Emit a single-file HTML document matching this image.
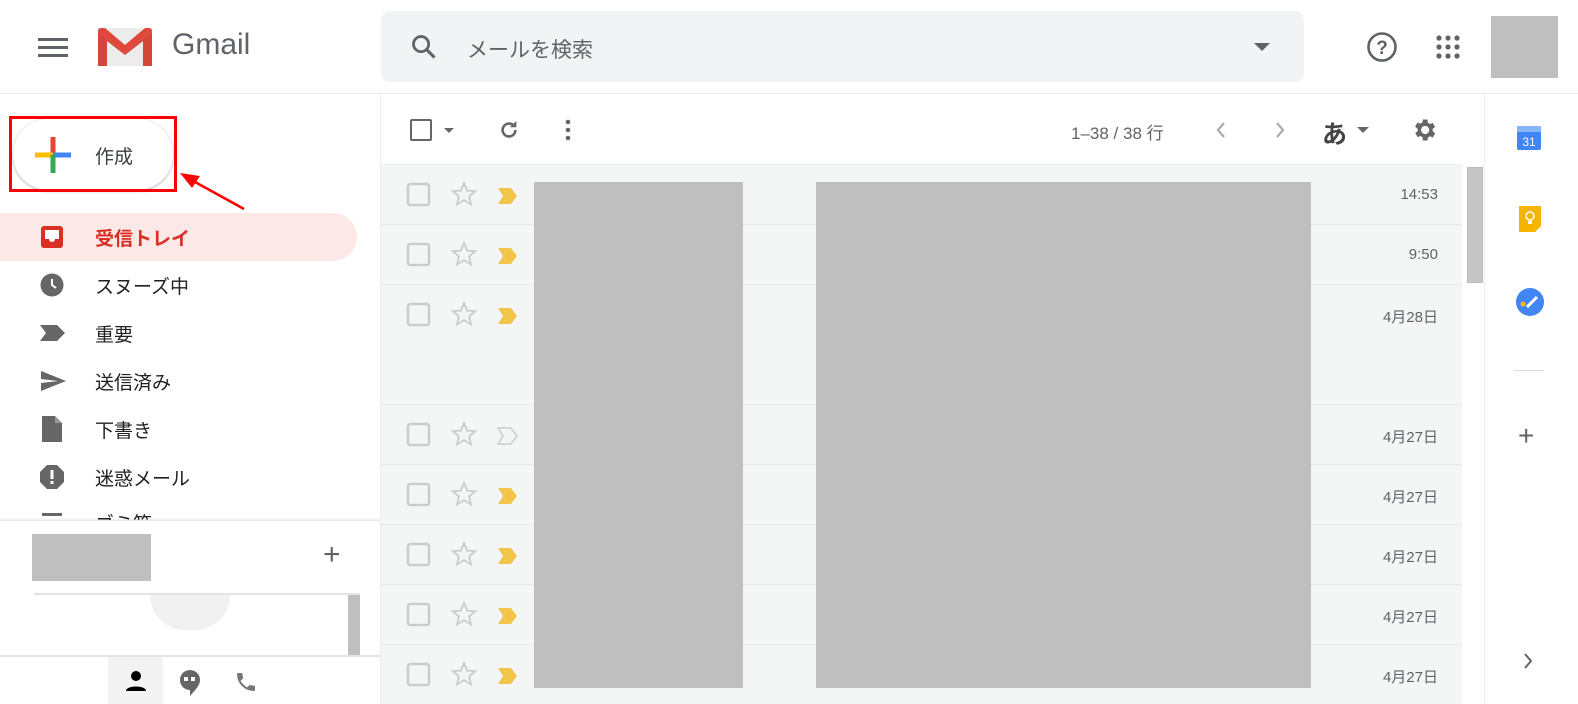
<!DOCTYPE html>
<html style="overflow:hidden;width:1578px;height:704px"><head><meta charset="utf-8"><style>
*{margin:0;padding:0;box-sizing:border-box}
body{width:1578px;height:704px;overflow:hidden;background:#fff;font-family:"Liberation Sans","Noto Sans CJK JP",sans-serif;color:#202124;position:relative}
.a{position:absolute}
.nav{position:absolute;left:0;width:357px;height:48px;display:flex;align-items:center;font-size:19px;color:#202124}
.nav .t{position:absolute;left:95px}
.nav svg{position:absolute;left:40px}
.row{position:absolute;left:381px;width:1081px;background:#f4f6f6;border-bottom:1px solid #e4e7ea}
.date{position:absolute;right:24px;font-size:15px;color:#5f6368}
</style></head><body>
<svg class="a" style="left:38px;top:36px" width="30" height="22"><rect y="2" width="30" height="3" fill="#5f6368"/><rect y="10" width="30" height="3" fill="#5f6368"/><rect y="18" width="30" height="3" fill="#5f6368"/></svg>
<svg class="a" style="left:97px;top:27px" width="56" height="40" viewBox="0 0 56 40"><rect x="1" y="1" width="54" height="38" rx="3" fill="#ececec"/><path d="M1 4 L28 26 L55 4 L55 39 L46 39 L46 14 L28 28 L10 14 L10 39 L1 39 Z" fill="#d44638"/><path d="M1 4 Q1 1 4 1 L8 1 L28 18 L48 1 L52 1 Q55 1 55 4 L28 26 Z" fill="#e1473b"/></svg>
<div class="a" style="left:172px;top:28px;font-size:30px;color:#5f6368">Gmail</div>
<div class="a" style="left:381px;top:11px;width:923px;height:71px;background:#f1f3f4;border-radius:9px"></div>
<svg class="a" style="left:410px;top:33px" width="28" height="28" viewBox="0 0 24 24"><circle cx="9.5" cy="9.5" r="6.5" fill="none" stroke="#5f6368" stroke-width="2.4"/><path d="M14.5 14.5L21 21" stroke="#5f6368" stroke-width="2.6"/></svg>
<div class="a" style="left:467px;top:34px;font-size:21px;color:#5f6368">メールを検索</div>
<div class="a" style="left:1254px;top:43px;border-left:8px solid transparent;border-right:8px solid transparent;border-top:8px solid #5f6368"></div>
<svg class="a" style="left:1366px;top:31px" width="32" height="32" viewBox="0 0 32 32"><circle cx="16" cy="16" r="13.5" fill="none" stroke="#5f6368" stroke-width="2.6"/><text x="16" y="23" text-anchor="middle" font-size="19" font-weight="bold" fill="#5f6368" font-family="Liberation Sans">?</text></svg>
<svg class="a" style="left:1436px;top:35px" width="24" height="24"><g fill="#5f6368"><circle cx="3" cy="3" r="2.6"/><circle cx="12" cy="3" r="2.6"/><circle cx="21" cy="3" r="2.6"/><circle cx="3" cy="12" r="2.6"/><circle cx="12" cy="12" r="2.6"/><circle cx="21" cy="12" r="2.6"/><circle cx="3" cy="21" r="2.6"/><circle cx="12" cy="21" r="2.6"/><circle cx="21" cy="21" r="2.6"/></g></svg>
<div class="a" style="left:1491px;top:16px;width:67px;height:62px;background:#bfbfbf"></div>
<div class="a" style="left:0;top:93px;width:1578px;height:1px;background:#e8e8e8"></div>
<div class="a" style="left:13px;top:119px;width:160px;height:71px;border-radius:36px;background:#fff;box-shadow:0 1px 3px rgba(0,0,0,.3)"></div>
<div class="a" style="left:9px;top:116px;width:168px;height:76px;border:3px solid #f00"></div>
<svg class="a" style="left:35px;top:137px" width="36" height="36" viewBox="0 0 36 36"><rect x="15.5" y="0" width="5" height="18" fill="#ea4335"/><rect x="0" y="15.5" width="18" height="5" fill="#fbbc04"/><rect x="18" y="15.5" width="18" height="5" fill="#4285f4"/><rect x="15.5" y="18" width="5" height="18" fill="#34a853"/></svg>
<div class="a" style="left:95px;top:142px;font-size:19px;color:#3c4043">作成</div>
<svg class="a" style="left:178px;top:168px" width="70" height="45"><path d="M66 41 L8 9" stroke="#f00" stroke-width="2.5"/><path d="M2 5 L22 8 L14 20 Z" fill="#f00"/></svg>
<div class="nav" style="top:213px;background:#fce8e6;border-radius:0 24px 24px 0;color:#d93025;font-weight:bold"><svg width="24" height="24" viewBox="0 0 24 24"><rect x="1" y="1" width="22" height="22" rx="3" fill="#d93025"/><path d="M5 5h14v9h-4a3 3 0 0 1-6 0H5z" fill="#fff"/></svg><span class="t">受信トレイ</span></div>
<div class="nav" style="top:261px"><svg width="24" height="24" viewBox="0 0 24 24"><circle cx="12" cy="12" r="11.5" fill="#666"/><path d="M12 6v6l4 3" stroke="#fff" stroke-width="2" fill="none"/></svg><span class="t">スヌーズ中</span></div>
<div class="nav" style="top:309px"><svg width="26" height="20" viewBox="0 0 26 20"><path d="M0 2h17l8 8-8 8H0l6-8z" fill="#666"/></svg><span class="t">重要</span></div>
<div class="nav" style="top:357px"><svg width="26" height="24" viewBox="0 0 26 24"><path d="M1 22L26 12 1 2v8l17 2-17 2z" fill="#666"/></svg><span class="t">送信済み</span></div>
<div class="nav" style="top:405px"><svg width="24" height="26" viewBox="0 0 24 26"><path d="M2 0h13l7 7v19H2z" fill="#666"/><path d="M15 0v7h7" fill="#999"/></svg><span class="t">下書き</span></div>
<div class="nav" style="top:453px"><svg width="24" height="24" viewBox="0 0 24 24"><path d="M7 0h10l7 7v10l-7 7H7l-7-7V7z" fill="#666"/><rect x="10.5" y="5" width="3" height="9" fill="#fff"/><rect x="10.5" y="16" width="3" height="3" fill="#fff"/></svg><span class="t">迷惑メール</span></div>
<div class="nav" style="top:501px;height:20px;overflow:hidden;align-items:flex-start"><svg width="24" height="24" style="top:10px"><rect x="2" y="2" width="20" height="3" fill="#666"/></svg><span class="t" style="top:8px">ゴミ箱</span></div>
<div class="a" style="left:0;top:520px;width:380px;height:184px;background:#fff;border-top:1px solid #e8e8e8;box-shadow:0 -1px 2px rgba(0,0,0,.08)"></div>
<div class="a" style="left:32px;top:534px;width:119px;height:47px;background:#bfbfbf"></div>
<div class="a" style="left:323px;top:538px;font-size:30px;color:#5f6368;font-weight:300">+</div>
<div class="a" style="left:34px;top:593px;width:326px;height:2px;background:#e4e4e4"></div>
<div class="a" style="left:150px;top:595px;width:80px;height:35px;background:#f1f1f1;border-radius:0 0 40px 40px"></div>
<div class="a" style="left:348px;top:595px;width:12px;height:60px;background:#bfbfbf"></div>
<div class="a" style="left:0;top:655px;width:380px;height:2px;background:#e4e4e4"></div>
<div class="a" style="left:108px;top:657px;width:55px;height:47px;background:#f3f3f3"></div>
<svg class="a" style="left:125px;top:670px" width="22" height="22" viewBox="0 0 22 22"><circle cx="11" cy="6" r="5" fill="#000"/><path d="M1 21c0-6 20-6 20 0z" fill="#000"/></svg>
<svg class="a" style="left:179px;top:670px" width="22" height="26" viewBox="0 0 22 26"><path d="M11 0a10 10 0 0 1 10 10c0 6-6 11-10 16V20A10 10 0 0 1 11 0z" fill="#666"/><rect x="5" y="7" width="4" height="4" fill="#fff"/><rect x="12" y="7" width="4" height="4" fill="#fff"/></svg>
<svg class="a" style="left:234px;top:670px" width="24" height="24" viewBox="0 0 24 24"><path d="M6.6 10.8c1.4 2.8 3.8 5.1 6.6 6.6l2.2-2.2c.3-.3.7-.4 1-.2 1.1.4 2.3.6 3.6.6.6 0 1 .4 1 1V20c0 .6-.4 1-1 1C10.6 21 3 13.4 3 4c0-.6.4-1 1-1h3.5c.6 0 1 .4 1 1 0 1.3.2 2.5.6 3.6.1.3 0 .7-.2 1z" fill="#777"/></svg>
<div class="a" style="left:380px;top:94px;width:1px;height:610px;background:#eee"></div>
<div class="a" style="left:410px;top:119px;width:22px;height:22px;border:2.5px solid #666;border-radius:2px"></div>
<div class="a" style="left:444px;top:128px;border-left:5px solid transparent;border-right:5px solid transparent;border-top:5px solid #666"></div>
<svg class="a" style="left:498px;top:119px" width="22" height="22" viewBox="0 0 24 24"><path d="M19 12a7 7 0 1 1-2.1-5" fill="none" stroke="#666" stroke-width="2.8"/><path d="M20 2v7h-7z" fill="#666"/></svg>
<svg class="a" style="left:564px;top:119px" width="8" height="24"><circle cx="4" cy="3" r="2.3" fill="#666"/><circle cx="4" cy="11" r="2.3" fill="#666"/><circle cx="4" cy="19" r="2.3" fill="#666"/></svg>
<div class="a" style="left:1071px;top:119px;font-size:17px;color:#5f6368">1–38 / 38 行</div>
<svg class="a" style="left:1215px;top:121px" width="12" height="18"><path d="M9 2L3 9l6 7" fill="none" stroke="#aaa" stroke-width="2.2"/></svg>
<svg class="a" style="left:1274px;top:121px" width="12" height="18"><path d="M3 2l6 7-6 7" fill="none" stroke="#aaa" stroke-width="2.2"/></svg>
<div class="a" style="left:1322px;top:115px;font-size:25px;color:#444;font-weight:bold">あ</div>
<div class="a" style="left:1357px;top:127px;border-left:6px solid transparent;border-right:6px solid transparent;border-top:6px solid #666"></div>
<svg class="a" style="left:1410px;top:116px" width="28" height="28" viewBox="0 0 24 24"><path fill="#666" d="M19.4 13a7.5 7.5 0 0 0 0-2l2.1-1.6-2-3.5-2.5 1a7 7 0 0 0-1.7-1L15 3h-4l-.4 2.6a7 7 0 0 0-1.7 1l-2.5-1-2 3.5L6.6 11a7.5 7.5 0 0 0 0 2l-2.1 1.6 2 3.5 2.5-1a7 7 0 0 0 1.7 1L11 21h4l.4-2.6a7 7 0 0 0 1.7-1l2.5 1 2-3.5zM13 15.5a3.5 3.5 0 1 1 0-7 3.5 3.5 0 0 1 0 7z"/></svg>
<div class="a" style="left:381px;top:164px;width:1081px;height:1px;background:#eceff1"></div>
<div class="row" style="top:165px;height:60px"><div class="date" style="top:21px">14:53</div></div>
<div class="row" style="top:225px;height:60px"><div class="date" style="top:21px">9:50</div></div>
<div class="row" style="top:285px;height:120px"><div class="date" style="top:21px">4月28日</div></div>
<div class="row" style="top:405px;height:60px"><div class="date" style="top:21px">4月27日</div></div>
<div class="row" style="top:465px;height:60px"><div class="date" style="top:21px">4月27日</div></div>
<div class="row" style="top:525px;height:60px"><div class="date" style="top:21px">4月27日</div></div>
<div class="row" style="top:585px;height:60px"><div class="date" style="top:21px">4月27日</div></div>
<div class="row" style="top:645px;height:59px;border-bottom:0"><div class="date" style="top:21px">4月27日</div></div>
<svg class="a" style="left:405px;top:180px" width="120" height="520">
<defs><g id="r"><rect x="3" y="4" width="21" height="21" rx="2" fill="none" stroke="#ccc" stroke-width="2.5"/><path d="M59 3l3.2 7.6 8.1.6-6.2 5.3 1.9 8-7-4.3-7 4.3 1.9-8-6.2-5.3 8.1-.6z" fill="none" stroke="#ccc" stroke-width="1.8"/></g><path id="tag" d="M93 8h13l6 8-6 8H93l5-8z"/></defs>
<g><use href="#r"/><use href="#tag" fill="#f2c54b"/></g>
<g transform="translate(0,60)"><use href="#r"/><use href="#tag" fill="#f2c54b"/></g>
<g transform="translate(0,120)"><use href="#r"/><use href="#tag" fill="#f2c54b"/></g>
<g transform="translate(0,240)"><use href="#r"/><use href="#tag" fill="none" stroke="#ccc" stroke-width="1.5"/></g>
<g transform="translate(0,300)"><use href="#r"/><use href="#tag" fill="#f2c54b"/></g>
<g transform="translate(0,360)"><use href="#r"/><use href="#tag" fill="#f2c54b"/></g>
<g transform="translate(0,420)"><use href="#r"/><use href="#tag" fill="#f2c54b"/></g>
<g transform="translate(0,480)"><use href="#r"/><use href="#tag" fill="#f2c54b"/></g>
</svg>
<div class="a" style="left:534px;top:182px;width:209px;height:506px;background:#bfbfbf"></div>
<div class="a" style="left:816px;top:182px;width:495px;height:506px;background:#bfbfbf"></div>
<div class="a" style="left:1462px;top:165px;width:22px;height:539px;background:#fff"></div>
<div class="a" style="left:1467px;top:167px;width:16px;height:116px;background:#c6c6c6;border:1px solid #bbb"></div>
<div class="a" style="left:1484px;top:94px;width:1px;height:610px;background:#eee"></div>
<svg class="a" style="left:1514px;top:124px" width="30" height="28" viewBox="0 0 30 28"><rect x="3" y="2" width="24" height="24" rx="2" fill="#4285f4"/><rect x="3" y="2" width="24" height="6" fill="#8ab4f8"/><text x="15" y="22" text-anchor="middle" font-size="12" fill="#fff" font-family="Liberation Sans">31</text></svg>
<svg class="a" style="left:1517px;top:206px" width="26" height="26" viewBox="0 0 26 26"><path d="M2 0h22v20l-6 6H2z" fill="#f4b400"/><circle cx="13" cy="10" r="4" fill="none" stroke="#fff" stroke-width="1.5"/><rect x="11" y="15" width="4" height="3" fill="#fff"/></svg>
<svg class="a" style="left:1515px;top:287px" width="30" height="30" viewBox="0 0 30 30"><circle cx="15" cy="15" r="14" fill="#4285f4"/><circle cx="8" cy="17" r="2.5" fill="#fbbc04"/><path d="M12 20l10-10" stroke="#fff" stroke-width="3"/></svg>
<div class="a" style="left:1514px;top:370px;width:30px;height:1px;background:#ddd"></div>
<div class="a" style="left:1518px;top:420px;font-size:28px;color:#5f6368;font-weight:300">+</div>
<svg class="a" style="left:1522px;top:652px" width="12" height="18"><path d="M3 2l6 7-6 7" fill="none" stroke="#5f6368" stroke-width="2"/></svg>
</body></html>
